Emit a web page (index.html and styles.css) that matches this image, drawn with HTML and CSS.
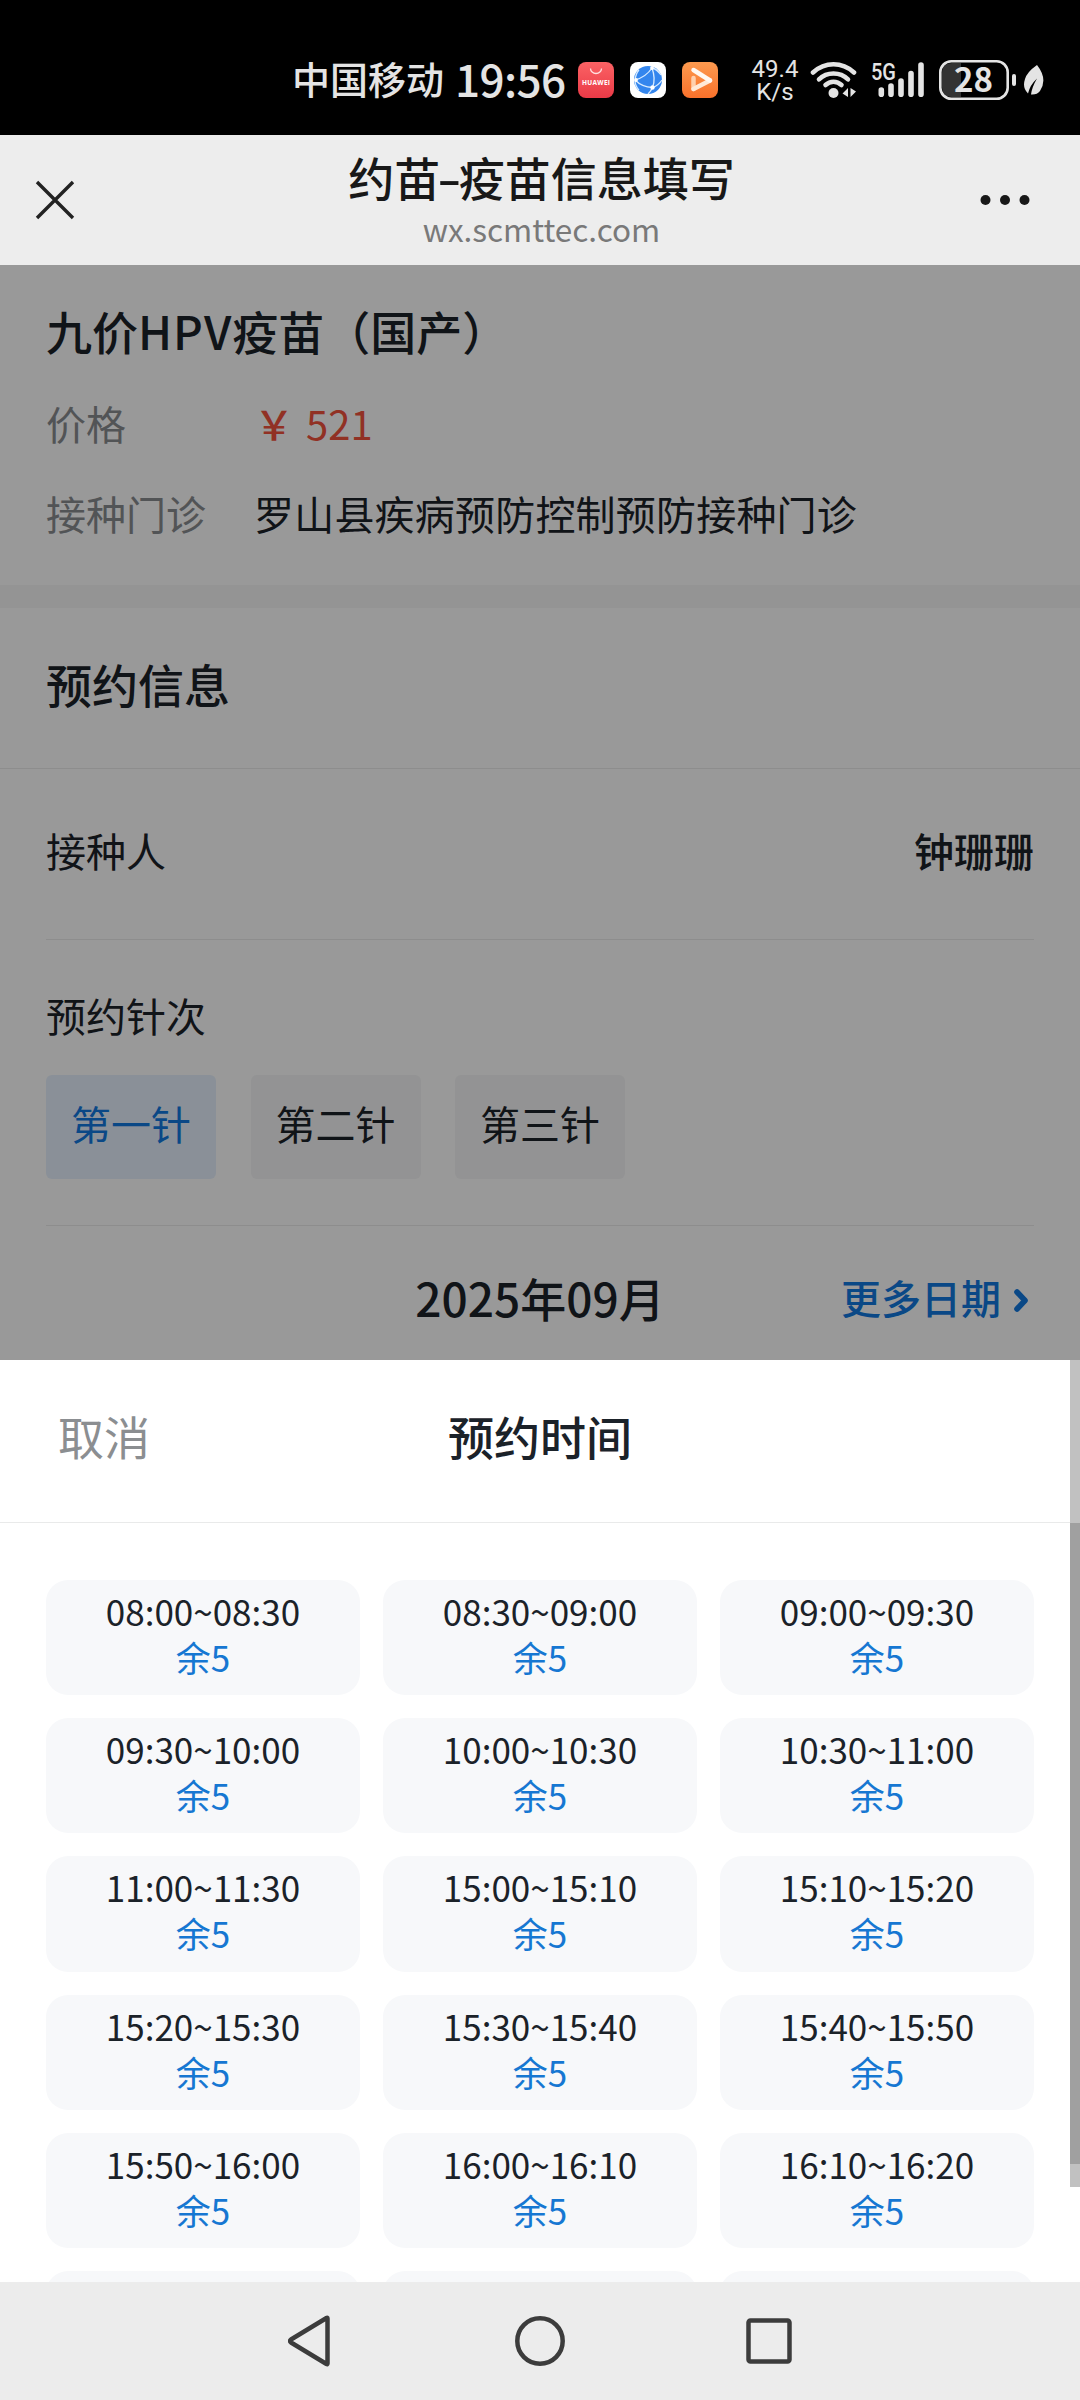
FILE: index.html
```html
<!DOCTYPE html>
<html lang="zh-CN">
<head>
  <meta charset="UTF-8">
  <title>约苗-疫苗信息填写</title>
  <meta name="viewport" content="width=device-width, initial-scale=1.0">
  <link rel="stylesheet" href="styles.css">
</head>
<body>

<div class="status-bar">
  <span class="carrier">中国移动</span>
  <span class="clock">19:56</span>
  <div class="app-icons">
    <svg width="36" height="36" viewBox="0 0 36 36">
      <defs>
        <linearGradient id="red" x1="0" y1="0" x2="0" y2="1"><stop offset="0" stop-color="#fb6264"/><stop offset="1" stop-color="#ea3a47"/></linearGradient>
      </defs>
      <rect width="36" height="36" rx="8" fill="url(#red)"/>
      <path d="M12.5 6.5a5.5 5 0 0 0 11 0" fill="none" stroke="#ffe1e1" stroke-width="1.3"/>
      <text x="18" y="22.5" class="huawei" text-anchor="middle" textLength="28">HUAWEI</text>
    </svg>
    <svg width="36" height="36" viewBox="0 0 36 36">
      <rect width="36" height="36" rx="8" fill="#fff"/>
      <circle cx="18" cy="18" r="14" fill="#3486ee"/>
      <path d="M5 18Q16 15 22 6M5 18Q12 25 22.500 25.500M22 6Q26 17 22.500 25.500Q21 29 18 32M22 6Q27 7 31 13M22.500 25.500Q28 24 32 18M5 18Q6 11 9 8M5 18Q5 24 9 28" fill="none" stroke="#d9ecff" stroke-width="1.300"/>
      <circle cx="22" cy="6" r="1.900" fill="#fff"/><circle cx="6" cy="18" r="1.900" fill="#fff"/><circle cx="22.500" cy="25.500" r="2.200" fill="#fff"/>
    </svg>
    <svg width="36" height="36" viewBox="0 0 36 36">
      <defs>
        <linearGradient id="orange" x1="0" y1="0" x2="0" y2="1"><stop offset="0" stop-color="#fd9a4f"/><stop offset="1" stop-color="#f9712b"/></linearGradient>
      </defs>
      <rect width="36" height="36" rx="8" fill="url(#orange)"/>
      <path d="M11.500 16V27" stroke="#ffd0ae" stroke-width="4.500" stroke-linecap="round"/>
      <path d="M11.500 27L28 18.500" stroke="#ffe9d8" stroke-width="4.500" stroke-linecap="round"/>
      <path d="M11.500 8L28 18.500" stroke="#fff8f2" stroke-width="4.500" stroke-linecap="round"/>
    </svg>
  </div>
  <div class="net-speed"><span>49.4</span><span>K/s</span></div>
  <svg class="wifi" width="48" height="38" viewBox="0 0 48 38">
    <g fill="none" stroke="#e4e4e4" stroke-width="4.600" stroke-linecap="round">
      <path d="M3 11.500Q12 3.300 23.500 3.300T44 11.500"/>
      <path d="M9 18.300Q15 12.500 23.500 12.500T38 18.300"/>
      <path d="M15.500 24Q19 20.800 23.500 20.800T31.500 24"/>
    </g>
    <circle cx="23.500" cy="32" r="5" fill="#e4e4e4"/>
    <path d="M38 27V36L32.500 32.500ZM40.500 27L46 30.500 40.500 36Z" fill="#e4e4e4"/>
  </svg>
  <svg class="signal" width="54" height="38" viewBox="0 0 54 38">
    <text x="0" y="18.500" class="net-type" textLength="25" lengthAdjust="spacingAndGlyphs">5G</text>
    <g stroke="#e4e4e4" stroke-width="5.600" stroke-linecap="round">
      <path d="M10.300 29V33.300M20 25V33.300M30 20V33.300M40 12.500V33.300M50 4V33.300"/>
    </g>
  </svg>
  <svg class="battery" width="78" height="40" viewBox="0 0 78 40">
    <path d="M22 3H13Q3 3 3 13V27Q3 37 13 37H22Z" fill="#333"/>
    <rect x="1.300" y="1.300" width="67.400" height="37.400" rx="11" fill="none" stroke="#e4e4e4" stroke-width="2.600"/>
    <text x="34.500" y="32" class="battery-level" text-anchor="middle">28</text>
    <rect x="73" y="14" width="4" height="12" rx="2" fill="#e4e4e4"/>
  </svg>
  <svg class="leaf" width="22" height="32" viewBox="0 0 22 32">
    <path d="M14 1Q25 15 17 27Q14 31 8 30.500Q9 23 14 14.500Q7 21 5 29.500Q-1 24 2 15Q4 8 14 1Z" fill="#e4e4e4"/>
  </svg>
</div>

<div class="title-bar">
  <svg class="close" width="40" height="40" viewBox="0 0 40 40">
    <path d="M2 2L38 38M38 2L2 38" stroke="#222" stroke-width="3.400"/>
  </svg>
  <div class="page-name">
    <div class="page-title">约苗<span class="dash">-</span>疫苗信息填写</div>
    <div class="page-url">wx.scmttec.com</div>
  </div>
  <svg class="more" width="50" height="12" viewBox="0 0 50 12">
    <circle cx="5.500" cy="6" r="5"/><circle cx="25" cy="6" r="5"/><circle cx="44.500" cy="6" r="5"/>
  </svg>
</div>

<div class="page">
  <div class="vaccine">
    <div class="vaccine-name">九价<span class="latin">HPV</span>疫苗（国产）</div>
    <div class="vaccine-row"><label>价格</label><span class="price"><span class="yen">￥</span>521</span></div>
    <div class="vaccine-row"><label>接种门诊</label><span class="clinic">罗山县疾病预防控制预防接种门诊</span></div>
  </div>
  <div class="section-title">预约信息</div>
  <div class="form">
    <div class="person"><span>接种人</span><span class="person-name">钟珊珊</span></div>
    <div class="dose">
      <div class="dose-label">预约针次</div>
      <div class="dose-list">
        <div class="dose-item active">第一针</div>
        <div class="dose-item">第二针</div>
        <div class="dose-item">第三针</div>
      </div>
    </div>
    <div class="month-row">
      <span class="month">2025年09月</span>
      <span class="more-date">更多日期
        <svg width="15" height="23" viewBox="0 0 15 23"><path d="M3 3L11 11.500 3 20" fill="none" stroke="#1278e0" stroke-width="5.600" stroke-linecap="round" stroke-linejoin="round"/></svg>
      </span>
    </div>
  </div>
  <div class="mask"></div>
</div>

<div class="sheet">
  <div class="sheet-header">
    <span class="cancel">取消</span>
    <span class="sheet-title">预约时间</span>
  </div>
  <div id="time-list" class="time-list"></div>
  <div class="scroll-track"><div class="scroll-thumb"></div></div>
</div>

<div class="nav-bar">
  <svg width="46" height="52" viewBox="0 0 46 52"><path d="M39.500 3.500V48.500Q39.500 49.500 38.500 49L3 27.500Q1 26 3 24.500L38.500 3Q39.500 2.500 39.500 3.500Z"/></svg>
  <svg width="52" height="52" viewBox="0 0 52 52"><circle cx="26" cy="26" r="22.700"/></svg>
  <svg width="46" height="52" viewBox="0 0 46 52"><rect x="2.500" y="5.500" width="41" height="41" rx="2"/></svg>
</div>

<script>
  const times = [
    '08:00~08:30', '08:30~09:00', '09:00~09:30',
    '09:30~10:00', '10:00~10:30', '10:30~11:00',
    '11:00~11:30', '15:00~15:10', '15:10~15:20',
    '15:20~15:30', '15:30~15:40', '15:40~15:50',
    '15:50~16:00', '16:00~16:10', '16:10~16:20',
    '', '', ''
  ];
  const list = document.getElementById('time-list');

  times.forEach(time => {
    const div = document.createElement('div');
    div.className = 'time-item';
    if (time) {
      div.innerHTML = `<div class="time">${time}</div><div class="left">余5</div>`;
    }
    list.appendChild(div);
  });
</script>

</body>
</html>
```

FILE: styles.css
```css
* { box-sizing: border-box; }
body { margin: 0; width: 1080px; height: 2400px; overflow: hidden; background: #fff; color: #1b2229; font-family: "Noto Sans CJK SC", sans-serif; }
svg { display: block; flex: none; }

.status-bar { display: flex; align-items: center; height: 135px; padding: 25px 0 0 292px; background: #000; color: #e4e4e4; white-space: nowrap; }
.carrier { width: 163px; font-size: 38px; font-weight: 500; line-height: 46px; padding-bottom: 4px; }
.clock { width: 123px; font-size: 44px; font-weight: 500; letter-spacing: -0.6px; line-height: 46px; padding-bottom: 4px; }
.app-icons { display: flex; gap: 16px; }
.huawei { font-family: "Open Sans", sans-serif; font-size: 6.5px; font-weight: bold; fill: #fff; }
.net-speed { display: flex; flex-direction: column; width: 50px; margin-left: 32px; padding-top: 1px; text-align: center; font-family: Roboto, sans-serif; font-size: 24px; line-height: 23px; }
.wifi { margin-left: 10px; }
.signal { margin-left: 13px; }
.net-type { font-family: Roboto, sans-serif; font-size: 24px; font-weight: 500; fill: #e4e4e4; }
.battery { margin-left: 14px; }
.battery-level { font-family: "Noto Sans CJK SC", sans-serif; font-size: 33px; font-weight: bold; fill: #e4e4e4; }
.leaf { margin-left: 6px; }

.title-bar { display: flex; align-items: center; justify-content: space-between; height: 130px; padding: 0 50px 0 35px; background: #ededed; }
.page-name { flex: 1; padding-left: 28px; padding-bottom: 3px; text-align: center; }
.page-title { color: #181818; font-size: 46px; font-weight: 500; line-height: 56px; }
.dash { display: inline-block; margin: 0 1px; transform: scaleX(1.5); }
.page-url { padding-top: 3px; color: #797979; font-size: 31.5px; line-height: 42px; }
.more { fill: #181818; }

.page { position: relative; height: 1095px; background: #fff; font-size: 40px; }
.mask { position: absolute; top: 0; left: 0; right: 0; bottom: 0; background: rgba(0, 0, 0, 0.4); }
.vaccine { height: 320px; padding: 17px 46px 0; }
.vaccine-name { font-size: 46px; font-weight: 500; line-height: 96px; }
.latin { letter-spacing: 1px; }
.vaccine-row { display: flex; line-height: 90px; }
.vaccine-row label { width: 208px; color: #898c90; }
.price { color: #f2523d; }
.yen { margin-right: 12px; font-weight: 500; }
.clinic { letter-spacing: 0.2px; }
.section-title { height: 184px; padding: 0 46px 9px; border-top: 23px solid #f7f7f7; border-bottom: 1px solid #ebebeb; font-size: 46px; font-weight: 500; line-height: 151px; }
.form { padding: 0 46px; }
.person { display: flex; justify-content: space-between; height: 171px; line-height: 162px; border-bottom: 1px solid #ebebeb; }
.person-name { font-weight: 500; }
.dose { height: 286px; border-bottom: 1px solid #ebebeb; }
.dose-label { height: 135px; padding-top: 15px; line-height: 120px; }
.dose-list { display: flex; gap: 34.5px; }
.dose-item { width: 170px; height: 104px; border-radius: 6px; background: #f5f6f7; text-align: center; line-height: 96px; }
.dose-item.active { background: #e6f1fd; color: #1278e0; }
.month-row { display: grid; grid-template-columns: 1fr auto 1fr; align-items: center; height: 134px; padding-top: 7px; }
.month { grid-column: 2; font-size: 46px; font-weight: 500; }
.more-date { display: flex; align-items: center; justify-content: flex-end; gap: 13px; padding-right: 5px; color: #1278e0; font-weight: 500; }
.more-date svg { margin-top: 8px; }

.sheet { position: relative; height: 922px; overflow: hidden; background: #fff; }
.sheet-header { display: grid; grid-template-columns: 1fr auto 1fr; height: 163px; padding: 0 58px; border-bottom: 1px solid #e9eaea; font-size: 46px; line-height: 151px; }
.cancel { color: #8b8e91; }
.sheet-title { font-weight: 500; }
.time-list { display: grid; grid-template-columns: repeat(3, 1fr); grid-auto-rows: 115.2px; gap: 23px; padding: 57px 46px 0; }
.time-item { padding-top: 8px; border-radius: 22px; background: #f7f8fa; text-align: center; font-size: 35px; line-height: 46px; }
.left { color: #1677d2; }
.scroll-track { position: absolute; top: 0; right: 0; width: 10px; height: 827px; padding-top: 163px; background: #c1c1c1; }
.scroll-thumb { height: 641px; background: #a0a0a0; }

.nav-bar { display: flex; justify-content: center; gap: 180px; height: 118px; padding-top: 33px; background: #ececec; }
.nav-bar svg { fill: none; stroke: #3c3c3c; stroke-width: 4.500; stroke-linejoin: round; }
```
